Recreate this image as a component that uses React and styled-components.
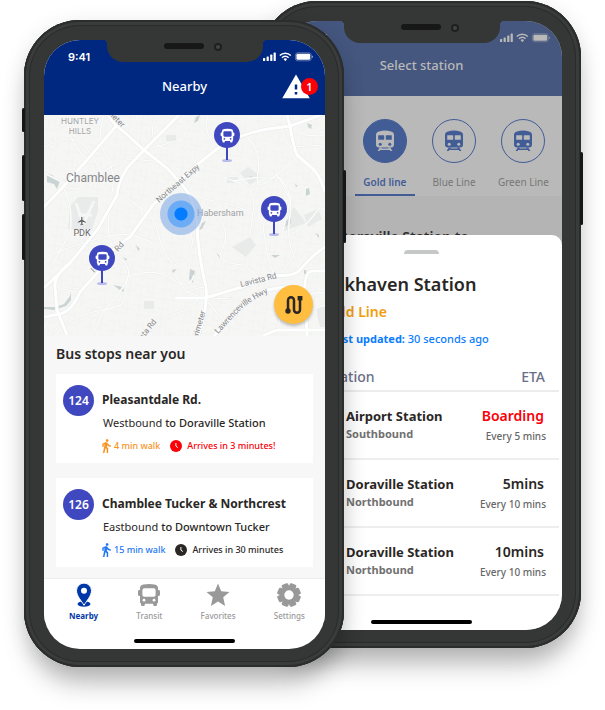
import React from "react";
import styled, { createGlobalStyle, css } from "styled-components";
import { MdWarning } from "react-icons/md";

const GlobalStyle = createGlobalStyle`
  *, *::before, *::after { box-sizing: border-box; }
  body {
    margin: 0;
    background: #fff;
    color: #2a2725;
    font-family: "Noto Sans", "Open Sans", sans-serif;
  }
  button { font: inherit; color: inherit; border: 0; padding: 0; background: none; cursor: pointer; }
  h1, h2, h3, p, ul { margin: 0; padding: 0; }
  ul { list-style: none; }
`;

const Stage = styled.main`
  display: flex;
  align-items: flex-start;
  justify-content: center;
  padding: 1px 24px 42px;
  overflow: hidden;
`;

/* ---------- Phone shell ---------- */

const Shell = styled.section`
  position: relative;
  flex: 1 1 0;
  min-width: 280px;
  max-width: 380px;
  padding: 20px 19px 18px 20px;
  border-radius: 56px;
  background: #353636;
  box-shadow:
    inset 0 0 0 2px #2b2c2c,
    inset 0 0 0 5px #3a3b3b,
    inset 0 0 0 6px #2a2b2b,
    0 22px 26px -6px rgba(0, 0, 0, 0.26),
    0 4px 22px rgba(0, 0, 0, 0.1);
  ${(p) =>
    p.$front
      ? css`
          z-index: 1;
          margin-top: 19px;
        `
      : css`
          margin-left: -83px;
        `}
`;

const SideButton = styled.span`
  position: absolute;
  top: ${(p) => p.$top}px;
  ${(p) => p.$side}: -2px;
  width: 3px;
  height: ${(p) => p.$size}px;
  border-radius: 2px;
  background: #151616;
`;

const Screen = styled.div`
  position: relative;
  display: flex;
  flex-direction: column;
  min-height: 609px;
  border-radius: 36px;
  overflow: hidden;
  background: ${(p) => p.$bg};
`;

const NotchBox = styled.div`
  position: absolute;
  top: 0;
  left: 50%;
  width: 156px;
  height: 22px;
  margin-left: -78px;
  display: flex;
  align-items: flex-start;
  justify-content: center;
  gap: 10px;
  padding: 3px 0 0 16px;
  border-radius: 0 0 16px 16px;
  background: #353636;
  &::before, &::after {
    content: "";
    position: absolute;
    top: 0;
    width: 4px;
    height: 4px;
  }
  &::before { right: 100%; background: radial-gradient(circle at 0 100%, transparent 4px, #353636 4px); }
  &::after { left: 100%; background: radial-gradient(circle at 100% 100%, transparent 4px, #353636 4px); }
`;

const Speaker = styled.span`
  width: 40px;
  height: 6px;
  border-radius: 3px;
  background: #171717;
`;

const Camera = styled.span`
  width: 8px;
  height: 8px;
  border-radius: 50%;
  border: 2px solid #1e1f1f;
  background: #444;
`;

const Notch = () => (
  <NotchBox>
    <Speaker />
    <Camera />
  </NotchBox>
);

const StatusBar = styled.div`
  display: flex;
  align-items: center;
  justify-content: space-between;
  height: 34px;
  padding: 0 11px 0 24px;
  font: 600 11px/14px Inter, sans-serif;
`;

const StatusIcons = () => (
  <svg width="51" height="10" viewBox="0 0 51 10" fill="currentColor" aria-hidden="true">
    <rect x="0" y="6" width="2.2" height="3" rx=".6" />
    <rect x="3.6" y="4.4" width="2.2" height="4.6" rx=".6" />
    <rect x="7.2" y="2.6" width="2.2" height="6.4" rx=".6" />
    <rect x="10.6" y=".6" width="2.2" height="8.4" rx=".6" />
    <g fill="none" stroke="currentColor" strokeWidth="1.5">
      <path d="M16.8 3.5a7.6 7.6 0 0 1 11 0" />
      <path d="M19 5.7a4.5 4.5 0 0 1 6.6 0" />
    </g>
    <path d="M20.5 7.1a2.6 2.6 0 0 1 3.6 0L22.3 9.2z" />
    <rect x="32.4" y=".8" width="15.8" height="8" rx="2.3" fill="none" stroke="currentColor" strokeWidth=".7" opacity=".5" />
    <rect x="33.4" y="1.8" width="13.8" height="6" rx="1.4" />
    <path d="M48.9 3.4q1.3.5 1.3 1.4t-1.3 1.4z" opacity=".5" />
  </svg>
);

const HomeBar = styled.span`
  align-self: center;
  width: 101px;
  height: 4px;
  margin: auto 0 6px;
  border-radius: 2px;
  background: #000;
`;

const AppHeader = styled.header`
  height: 75px;
  color: ${(p) => p.$ink};
  background: ${(p) => p.$bg};
`;

const TitleRow = styled.div`
  display: grid;
  grid-template-columns: 44px 1fr 44px;
  align-items: center;
  height: 22px;
`;

const ScreenTitle = styled.h1`
  grid-column: 2;
  padding-bottom: 2px;
  text-align: center;
  font-size: 13px;
  line-height: 20px;
  font-weight: 500;
`;

/* ---------- Shared icons ---------- */

const BusIcon = ({ size, hole }) => (
  <svg width={size} height={size} viewBox="0 0 24 24" fill="currentColor" aria-hidden="true">
    <path d="M6.4 1.6Q12 .4 17.6 1.6 21 2.4 21 5v2h.4Q23 7 23 8.4v3Q23 13 21.4 13H21v6.2q0 1-1 1.3v1.3q0 1.2-1.2 1.2h-1.4q-1.2 0-1.2-1.2v-1H7.8v1Q7.8 23 6.6 23H5.2Q4 23 4 21.8V20.5q-1-.3-1-1.3V13h-.4Q1 13 1 11.4v-3Q1 7 2.6 7H3V5q0-2.6 3.4-3.4z" />
    <rect x="5.4" y="5.2" width="13.2" height="8.6" rx="1.8" fill={hole} />
    <circle cx="7" cy="17.2" r="1.4" fill={hole} />
    <circle cx="17" cy="17.2" r="1.4" fill={hole} />
  </svg>
);

const WalkIcon = () => (
  <svg width="9" height="14" viewBox="6 1 13 22" fill="currentColor" aria-hidden="true">
    <path d="M13.5 5.5c1.1 0 2-.9 2-2s-.9-2-2-2-2 .9-2 2 .9 2 2 2zM9.8 8.9L7 23h2.1l1.8-8 2.1 2v6h2v-7.5l-2.1-2 .6-3C14.8 12 16.8 13 19 13v-2c-1.9 0-3.5-1-4.3-2.4l-1-1.6c-.4-.6-1-1-1.7-1-.3 0-.5.1-.8.1L6 8.3V13h2V9.6l1.8-.7" stroke="currentColor" strokeWidth=".3" />
  </svg>
);

const ClockIcon = () => (
  <svg width="12" height="12" viewBox="0 0 12 12" aria-hidden="true">
    <circle cx="6" cy="6" r="6" fill="currentColor" />
    <path d="M5.9 3v3.1l1.9 1.5" fill="none" stroke="#fff" strokeWidth="1" />
  </svg>
);

const TrainIcon = ({ hole }) => (
  <svg width="20" height="22" viewBox="0 0 20 22" fill="currentColor" aria-hidden="true">
    <path d="M4 1.4Q10-.6 16 1.4q3 .8 3 3.6v9.5q0 3-3 3H4q-3 0-3-3V5q0-2.8 3-3.6z" />
    <g fill={hole}>
      <rect x="3.2" y="5.2" width="6" height="4.6" rx=".5" />
      <rect x="10.8" y="5.2" width="6" height="4.6" rx=".5" />
      <circle cx="5.2" cy="14.3" r="1.5" />
      <circle cx="14.8" cy="14.3" r="1.5" />
    </g>
    <path d="M4.8 17.5h2.2l-.6 1.1h7.2l-.6-1.1h2.2l2.2 3.5h-2l-.6-1H5.2l-.6 1h-2z" />
  </svg>
);

const PinIcon = () => (
  <svg width="24" height="24" viewBox="0 0 24 24" aria-hidden="true">
    <ellipse cx="12" cy="21" rx="6.5" ry="2.8" fill="currentColor" />
    <path d="M12 22.3C9.5 18 4.5 13 4.5 7.6a7.5 7.5 0 0 1 15 0C19.5 13 14.5 18 12 22.3z" fill="currentColor" stroke="#fff" strokeWidth="1" />
    <circle cx="12" cy="7.8" r="3" fill="#fff" />
  </svg>
);

const StarIcon = () => (
  <svg width="24" height="24" viewBox="0 0 24 24" fill="currentColor" aria-hidden="true">
    <path d="M12 .5l3.2 7.7 8.3.7-6.3 5.4 1.9 8.7L12 18.5 4.9 23l1.9-8.7L.5 8.9l8.3-.7z" />
  </svg>
);

const GearIcon = () => (
  <svg width="24" height="24" viewBox="0 0 24 24" aria-hidden="true">
    <g fill="currentColor">
      {[0, 45, 90, 135].map((a) => (
        <rect key={a} x="8.5" y=".2" width="7" height="23.6" rx="1.5" transform={`rotate(${a + 22.5} 12 12)`} />
      ))}
      <circle cx="12" cy="12" r="9" />
    </g>
    <circle cx="12" cy="12" r="4.7" fill="#fff" />
  </svg>
);

/* ---------- Nearby screen ---------- */

const AlertButton = styled.button`
  position: relative;
  justify-self: start;
  width: 30px;
  height: 26px;
  display: flex;
  align-items: center;
  justify-content: center;
`;

const AlertCount = styled.span`
  position: absolute;
  top: 4px;
  right: -7px;
  width: 17px;
  height: 17px;
  border-radius: 50%;
  background: #fb0007;
  color: #fff;
  font-size: 11px;
  font-weight: 600;
  line-height: 17px;
  text-align: center;
`;

const MapArea = styled.div`
  position: relative;
  height: 221px;
  background: #f5f5f4;
`;

const StopPin = styled.button`
  position: absolute;
  left: ${(p) => p.$x}px;
  top: ${(p) => p.$y}px;
  display: flex;
  align-items: flex-start;
  width: 26px;
  height: 40px;
  color: #fff;
`;

const PinHead = styled.span`
  position: relative;
  display: flex;
  align-items: center;
  justify-content: center;
  width: 26px;
  height: 26px;
  border-radius: 50%;
  background: #4048bf;
  &::after {
    content: "";
    position: absolute;
    top: 25px;
    left: 12px;
    width: 2px;
    height: 13px;
    background: #4048bf;
  }
  &::before {
    content: "";
    position: absolute;
    top: 37px;
    left: 8px;
    width: 10px;
    height: 3px;
    border-radius: 50%;
    background: #b9bce8;
  }
`;

const HereDot = styled.span`
  position: absolute;
  left: 116px;
  top: 78px;
  width: 42px;
  height: 42px;
  border-radius: 50%;
  background: radial-gradient(circle, #047cff 6px, #6cacf5 7px, #6cacf5 13px, rgba(120, 164, 226, 0.55) 14px);
`;

const RouteButton = styled.button`
  position: absolute;
  right: 12px;
  bottom: 12px;
  width: 39px;
  height: 39px;
  display: flex;
  align-items: center;
  justify-content: center;
  border-radius: 50%;
  background: #ffbe40;
  color: #2a2725;
  box-shadow: 0 2px 3px rgba(0, 0, 0, 0.25);
`;

const minorRoads = [
  "M0 32Q22 20 34 26T58 60Q50 72 30 74L19 72",
  "M0 58L20 68L46 62L84 44L110 46",
  "M19 72Q30 92 26 118L8 150",
  "M19 80H78L96 92 102 110",
  "M60 0Q52 24 62 40T68 78",
  "M92 0Q98 18 92 28M112 0Q104 20 114 30T140 20L150 0",
  "M43 45Q20 20 24 0",
  "M0 142Q30 130 60 122T110 130",
  "M73 80Q60 100 66 124L52 150",
  "M70 140Q88 150 84 162T60 196L48 220",
  "M84 162Q110 152 128 164T150 160",
  "M0 222Q30 200 54 196T80 186L84 160",
  "M151 36Q170 60 190 66T210 90L206 120",
  "M201 20Q218 36 214 58T232 60L252 44",
  "M153 50Q140 30 132 20",
  "M164 0Q160 14 168 28L181 28",
  "M190 66Q212 62 222 62T236 64L246 84 238 120",
  "M246 11Q262 24 281 20M246 32L281 30M253 40Q240 28 238 12",
  "M232 60Q250 74 246 100T250 140L236 160",
  "M219 110Q222 140 230 160L232 172 240 180 234 215",
  "M246 120Q262 112 270 100T281 96",
  "M131 150Q146 142 148 130T140 108",
  "M131 183Q150 172 162 172H200",
  "M162 185L180 206 184 220M165 183L190 184",
  "M131 160L142 176 160 184",
  "M176 104Q186 120 178 134T200 150L214 162",
  "M107 220Q120 200 140 196L158 182",
  "M281 190L263 196M263 180Q272 176 281 178",
  "M100 35Q120 30 131 26",
  "M142 75Q156 84 170 86T204 96",
  "M96 92Q110 100 114 118T128 148",
  "M11 172Q24 176 36 177M13 195Q0 210 0 214",
];

const mainRoads = [
  "M64 0Q72 12 79 16L100 35 123 53 131 62Q146 76 150 92L153 105Q153 124 156 142T162 172Q164 194 154 221",
  "M281 -2Q262 6 246 11L224 14Q205 17 181 28Q165 40 153 50L130 70 109 90 86 122 71 133Q60 144 54 157L36 177Q28 196 16 199L0 202",
  "M135 0L100 35 83 53Q74 68 73 80L54 114 26 148 0 173",
  "M73 10L43 45 19 72 0 92",
  "M26 148Q10 160 11 172T13 195L23 220",
  "M243 0L246 11Q250 34 253 40Q260 46 268 53T281 77",
  "M281 132Q270 140 268 142T254 157Q244 162 232 160L198 172 161 183H131",
  "M281 156H268Q262 157 261 168Q260 190 263 215V221",
  "M281 215H234Q226 217 219 221",
  "M170 221Q190 196 218 176L240 172",
];

const parks = [
  "M34 82L54 82 54 96 48 114 24 114 26 92z",
  "M204 52L218 62 206 70 196 58z",
  "M260 100L274 94 278 104 264 112z",
  "M246 96L250 92 262 108 240 116z",
  "M188 132L206 122 212 130 202 142z",
  "M183 62H194V68H183zM100 186H110V194H100zM122 20H132V26H122z",
  "M272 192H281V212H276z",
];

const waters = [
  "M152 2l4-2-2 6-4 2zM263 8l5 2-1 4-3-2z",
  "M262 74l3-1 1 6-4 2zM242 106l5-4 0 6-6 4z",
  "M146 154l5 2-2 12-4-4zM172 138l7 5-3 0z",
  "M158 108l4-2-4 8-3 1zM227 140l9 0-5 3z",
  "M69 170l10 2 1 5-4-2zM92 130l4 4-2 2zM79 142l4 2-1 2z",
  "M0 192l12 0 8-3 6-8 1-4 0 8-5 6-12 4-10-1z",
  "M128 155l5-1-4 4zM183 184l5-2-3 3zM271 118l4 2 0 3z",
  "M3 60q6-2 8 4l5 2-3 8-3-5-7-2z",
  "M205 62l3-1 0 3zM251 69l3 2-2 1zM260 155l2 0 0 4-2 0z",
];

const MapSvg = styled.svg`
  display: block;
  width: 100%;
  height: 100%;
`;

const MapDrawing = () => (
  <MapSvg viewBox="0 0 281 221" preserveAspectRatio="xMinYMid slice" aria-label="Map of nearby stops" role="img">
    <defs>
      <pattern id="streets" width="23" height="19" patternUnits="userSpaceOnUse" patternTransform="rotate(8)">
        <path d="M0 4H12V0M6 4V19M12 9H23M17 0V14M0 14H17M12 4V9" fill="none" stroke="#f0f0ef" strokeWidth=".7" />
      </pattern>
      <path id="hwy" d="M174 219Q186 206 195 196T240 170" />
    </defs>
    <rect width="281" height="221" fill="#f6f6f5" />
    <rect width="281" height="221" fill="url(#streets)" />
    {parks.map((d) => <path key={d} d={d} fill="#e8ebea" />)}
    <path d="M32 88L40 110M50 86L40 108M34 100H48" stroke="#f5f6f6" strokeWidth="3" />
    {waters.map((d) => <path key={d} d={d} fill="#cad4d4" />)}
    <g fill="none">
      {minorRoads.map((d) => <path key={d} d={d} stroke="#eaecec" strokeWidth="2" />)}
      {minorRoads.map((d) => <path key={d} d={d} stroke="#fdfdfd" strokeWidth="1.2" />)}
      {mainRoads.map((d) => <path key={d} d={d} stroke="#e8eaea" strokeWidth="4" />)}
      {mainRoads.map((d) => <path key={d} d={d} stroke="#fff" strokeWidth="3" />)}
    </g>
    <path transform="translate(33 101) scale(.42)" fill="#606265" d="M21 16v-2l-8-5V3.5c0-.83-.67-1.5-1.5-1.5S10 2.67 10 3.5V9l-8 5v2l8-2.5V19l-2 1.5V22l3.5-1 3.5 1v-1.5L13 19v-5.5l8 2.5z" />
    <g fontFamily="Roboto, sans-serif" fill="#85878a" fontSize="8">
      <g fill="#a3a5a7" fontFamily="Inter, sans-serif" textAnchor="middle">
        <text x="36" y="9">HUNTLEY</text>
        <text x="36" y="19">HILLS</text>
      </g>
      <text x="22" y="67" fontSize="12">Chamblee</text>
      <text x="38" y="121" fontSize="9" fill="#66686b" textAnchor="middle">PDK</text>
      <text x="153" y="101" fill="#a0a2a4" fontSize="9">Habersham</text>
      <text transform="translate(115 88) rotate(-41)">Northeast Expy</text>
      <text transform="translate(53 -12) rotate(45)">Perimeter</text>
      <text transform="translate(50 158) rotate(-45)">I 85</text>
      <text transform="translate(74 137) rotate(-48)">Rd</text>
      <text transform="translate(197 172) rotate(-14)">Lavista Rd</text>
      <text transform="translate(90 236) rotate(-52)">Lavista Rd</text>
      <text transform="translate(152 230) rotate(-74)">Perimeter</text>
      <text><textPath href="#hwy">Lawrenceville Hwy</textPath></text>
    </g>
  </MapSvg>
);

const StopsPanel = styled.section`
  padding: 9px 12px 11px;
  background: #f7f7f7;
`;

const PanelTitle = styled.h2`
  font-size: 14px;
  line-height: 18px;
  font-weight: 600;
`;

const StopList = styled.ul`
  display: flex;
  flex-direction: column;
  gap: 15px;
  margin-top: 11px;
`;

const StopCard = styled.li`
  display: grid;
  grid-template-columns: 31px 1fr;
  column-gap: 8px;
  height: 89px;
  padding: 11px 7px 0;
  background: #fff;
`;

const RouteBadge = styled.span`
  width: 31px;
  height: 31px;
  border-radius: 50%;
  background: #4048bf;
  color: #fff;
  font-size: 12px;
  font-weight: 600;
  line-height: 31px;
  text-align: center;
`;

const StopName = styled.h3`
  padding-top: 5px;
  font-size: 12px;
  line-height: 20px;
  font-weight: 700;
  white-space: nowrap;
`;

const Direction = styled.p`
  margin-top: 5px;
  padding-left: 1px;
  font-size: 11px;
  line-height: 16px;
  white-space: nowrap;
  b { font-weight: 500; }
`;

const StopFacts = styled.p`
  display: flex;
  align-items: center;
  gap: 10px;
  margin-top: 8px;
  font-size: 9px;
  line-height: 14px;
  font-weight: 500;
  white-space: nowrap;
`;

const Fact = styled.span`
  display: inline-flex;
  align-items: center;
  gap: ${(p) => p.$gap}px;
  color: ${(p) => p.$ink};
`;

const TabBar = styled.nav`
  display: flex;
  justify-content: space-between;
  padding: 4px 20px 0 25px;
  border-top: 1px solid #ececec;
  background: #fff;
`;

const Tab = styled.button`
  display: flex;
  flex-direction: column;
  align-items: center;
  gap: 3px;
  color: ${(p) => (p.$active ? "#0038a8" : "#999")};
  font-size: 8px;
  line-height: 12px;
  font-weight: ${(p) => (p.$active ? 700 : 500)};
`;

const stops = [
  { route: "124", name: "Pleasantdale Rd.", way: "Westbound", to: "to Doraville Station", walk: "4 min walk", walkInk: "#f7931e", eta: "Arrives in 3 minutes!", etaInk: "#fb0007" },
  { route: "126", name: "Chamblee Tucker & Northcrest", way: "Eastbound", to: "to Downtown Tucker", walk: "15 min walk", walkInk: "#2277f5", eta: "Arrives in 30 minutes", etaInk: "#2a2725" },
];

const pins = [
  { x: 170, y: 7, label: "Northern stop" },
  { x: 217, y: 81, label: "Habersham stop" },
  { x: 45, y: 130, label: "I 85 stop" },
];

const NearbyPhone = () => (
  <Shell $front>
    <SideButton $side="left" $top={88} $size={24} />
    <SideButton $side="left" $top={135} $size={46} />
    <SideButton $side="left" $top={194} $size={46} />
    <SideButton $side="right" $top={150} $size={73} />
    <Screen $bg="#fff">
      <Notch />
      <AppHeader $bg="#002880" $ink="#fff">
        <StatusBar>
          <span>9:41</span>
          <StatusIcons />
        </StatusBar>
        <TitleRow>
          <ScreenTitle>Nearby</ScreenTitle>
          <AlertButton aria-label="1 alert">
            <MdWarning size={30} />
            <AlertCount>1</AlertCount>
          </AlertButton>
        </TitleRow>
      </AppHeader>
      <MapArea>
        <MapDrawing />
        <HereDot />
        {pins.map((p) => (
          <StopPin key={p.label} $x={p.x} $y={p.y} aria-label={p.label}>
            <PinHead><BusIcon size={15} hole="#4048bf" /></PinHead>
          </StopPin>
        ))}
        <RouteButton aria-label="Plan route">
          <svg width="18" height="20" viewBox="0 0 18 20" fill="none" stroke="currentColor" strokeWidth="2.5" aria-hidden="true">
            <path d="M3 16V5.2a3 3 0 0 1 6 0V14.8a3 3 0 0 0 6 0V5" />
            <circle cx="3" cy="16" r="2.7" fill="currentColor" stroke="none" />
            <rect x="12.6" y="1" width="4.8" height="4.4" fill="currentColor" stroke="none" />
          </svg>
        </RouteButton>
      </MapArea>
      <StopsPanel>
        <PanelTitle>Bus stops near you</PanelTitle>
        <StopList>
          {stops.map((s) => (
            <StopCard key={s.route}>
              <RouteBadge>{s.route}</RouteBadge>
              <div>
                <StopName>{s.name}</StopName>
                <Direction>{s.way} <b>{s.to}</b></Direction>
                <StopFacts>
                  <Fact $ink={s.walkInk} $gap={3}><WalkIcon />{s.walk}</Fact>
                  <Fact $ink={s.etaInk} $gap={5}><ClockIcon />{s.eta}</Fact>
                </StopFacts>
              </div>
            </StopCard>
          ))}
        </StopList>
      </StopsPanel>
      <TabBar>
        <Tab $active><PinIcon />Nearby</Tab>
        <Tab><BusIcon size={24} hole="#fff" />Transit</Tab>
        <Tab><StarIcon />Favorites</Tab>
        <Tab><GearIcon />Settings</Tab>
      </TabBar>
      <HomeBar />
    </Screen>
  </Shell>
);

/* ---------- Station screen ---------- */

const LineTabs = styled.nav`
  display: grid;
  grid-template-columns: repeat(4, 1fr);
  padding: 23px 4px 0 0;
  background: #b9b9b9;
`;

const LineTab = styled.button`
  display: flex;
  flex-direction: column;
  align-items: center;
  height: 77px;
  margin: 0 5px;
  border-bottom: 2px solid ${(p) => (p.$active ? "#425c96" : "transparent")};
  color: ${(p) => (p.$active ? "#425c96" : "#777")};
  font-size: 10px;
  line-height: 14px;
  font-weight: ${(p) => (p.$active ? 600 : 400)};
  white-space: nowrap;
`;

const LineDisc = styled.span`
  display: flex;
  align-items: center;
  justify-content: center;
  width: 44px;
  height: 44px;
  margin-bottom: 12px;
  border: 1px solid #425c96;
  border-radius: 50%;
  background: ${(p) => (p.$active ? "#425c96" : "transparent")};
  color: ${(p) => (p.$active ? "#b9b9b9" : "#425c96")};
`;

const DimmedPanel = styled.div`
  height: 39px;
  padding: 32px 0 0 57px;
  overflow: hidden;
  color: #2f2e2e;
  font-size: 14px;
  line-height: 18px;
  font-weight: 600;
  white-space: nowrap;
`;

const Sheet = styled.article`
  flex: 1;
  display: flex;
  flex-direction: column;
  padding-top: 15px;
  border-radius: 10px 10px 0 0;
  background: #fff;
`;

const Handle = styled.span`
  align-self: center;
  width: 35px;
  height: 4px;
  border-radius: 4px 4px 0 0;
  background: #c6c7c7;
`;

const StationName = styled.h2`
  margin: 17px 0 0 22px;
  font-size: 18px;
  line-height: 26px;
  font-weight: 600;
  white-space: nowrap;
`;

const LineName = styled.p`
  margin: 5px 0 0 42px;
  color: #f29d0c;
  font-size: 14px;
  line-height: 20px;
  font-weight: 600;
`;

const Updated = styled.p`
  margin: 9px 0 0 49px;
  color: #0a7cff;
  font-size: 11px;
  line-height: 16px;
  font-weight: 500;
  white-space: nowrap;
`;

const Departures = styled.table`
  width: calc(100% - 3px);
  margin-top: 17px;
  border-collapse: collapse;
  th {
    height: 27px;
    padding: 0 0 0 46px;
    border-bottom: 2px solid #ececec;
    color: #6a6e87;
    font-size: 14px;
    line-height: 20px;
    font-weight: 500;
    text-align: left;
  }
  th + th { padding: 0 14px 0 0; text-align: right; }
  td {
    height: 68px;
    padding: 0 0 0 65px;
    border-bottom: 2px solid #eee;
    vertical-align: middle;
    white-space: nowrap;
  }
  td + td { width: 96px; padding: 0 13px 0 0; text-align: right; }
`;

const Primary = styled.div`
  font-size: 13px;
  line-height: 18px;
  font-weight: 700;
  color: ${(p) => p.$ink || "inherit"};
`;

const Eta = styled(Primary)`
  padding-right: 2px;
  font-size: 14px;
  font-weight: 600;
`;

const Bound = styled.div`
  color: #717171;
  font-size: 11px;
  line-height: 18px;
  font-weight: 700;
`;

const Every = styled.div`
  margin-top: 3px;
  color: #666;
  font-size: 10px;
  line-height: 16px;
  font-weight: 500;
`;

const departures = [
  { name: "Airport Station", bound: "Southbound", eta: "Boarding", ink: "#fb0007", every: "Every 5 mins" },
  { name: "Doraville Station", bound: "Northbound", eta: "5mins", every: "Every 10 mins" },
  { name: "Doraville Station", bound: "Northbound", eta: "10mins", every: "Every 10 mins" },
];

const lines = ["Red Line", "Gold line", "Blue Line", "Green Line"];

const StationPhone = () => (
  <Shell>
    <SideButton $side="right" $top={151} $size={73} />
    <Screen $bg="#b4b4b4">
      <Notch />
      <AppHeader $bg="#45577f" $ink="#b9b9b9">
        <StatusBar>
          <span>9:41</span>
          <StatusIcons />
        </StatusBar>
        <TitleRow>
          <ScreenTitle>Select station</ScreenTitle>
        </TitleRow>
      </AppHeader>
      <LineTabs>
        {lines.map((l) => {
          const active = l === "Gold line";
          return (
            <LineTab key={l} $active={active}>
              <LineDisc $active={active}><TrainIcon hole={active ? "#425c96" : "#b9b9b9"} /></LineDisc>
              {l}
            </LineTab>
          );
        })}
      </LineTabs>
      <DimmedPanel>Doraville Station to</DimmedPanel>
      <Sheet>
        <Handle />
        <StationName>Brookhaven Station</StationName>
        <LineName>Gold Line</LineName>
        <Updated><b>Last updated:</b> 30 seconds ago</Updated>
        <Departures>
          <thead>
            <tr><th scope="col">Station</th><th scope="col">ETA</th></tr>
          </thead>
          <tbody>
            {departures.map((d, i) => (
              <tr key={i}>
                <td><Primary>{d.name}</Primary><Bound>{d.bound}</Bound></td>
                <td><Eta $ink={d.ink}>{d.eta}</Eta><Every>{d.every}</Every></td>
              </tr>
            ))}
          </tbody>
        </Departures>
        <HomeBar />
      </Sheet>
    </Screen>
  </Shell>
);

export default function App() {
  return (
    <>
      <GlobalStyle />
      <Stage>
        <NearbyPhone />
        <StationPhone />
      </Stage>
    </>
  );
}
